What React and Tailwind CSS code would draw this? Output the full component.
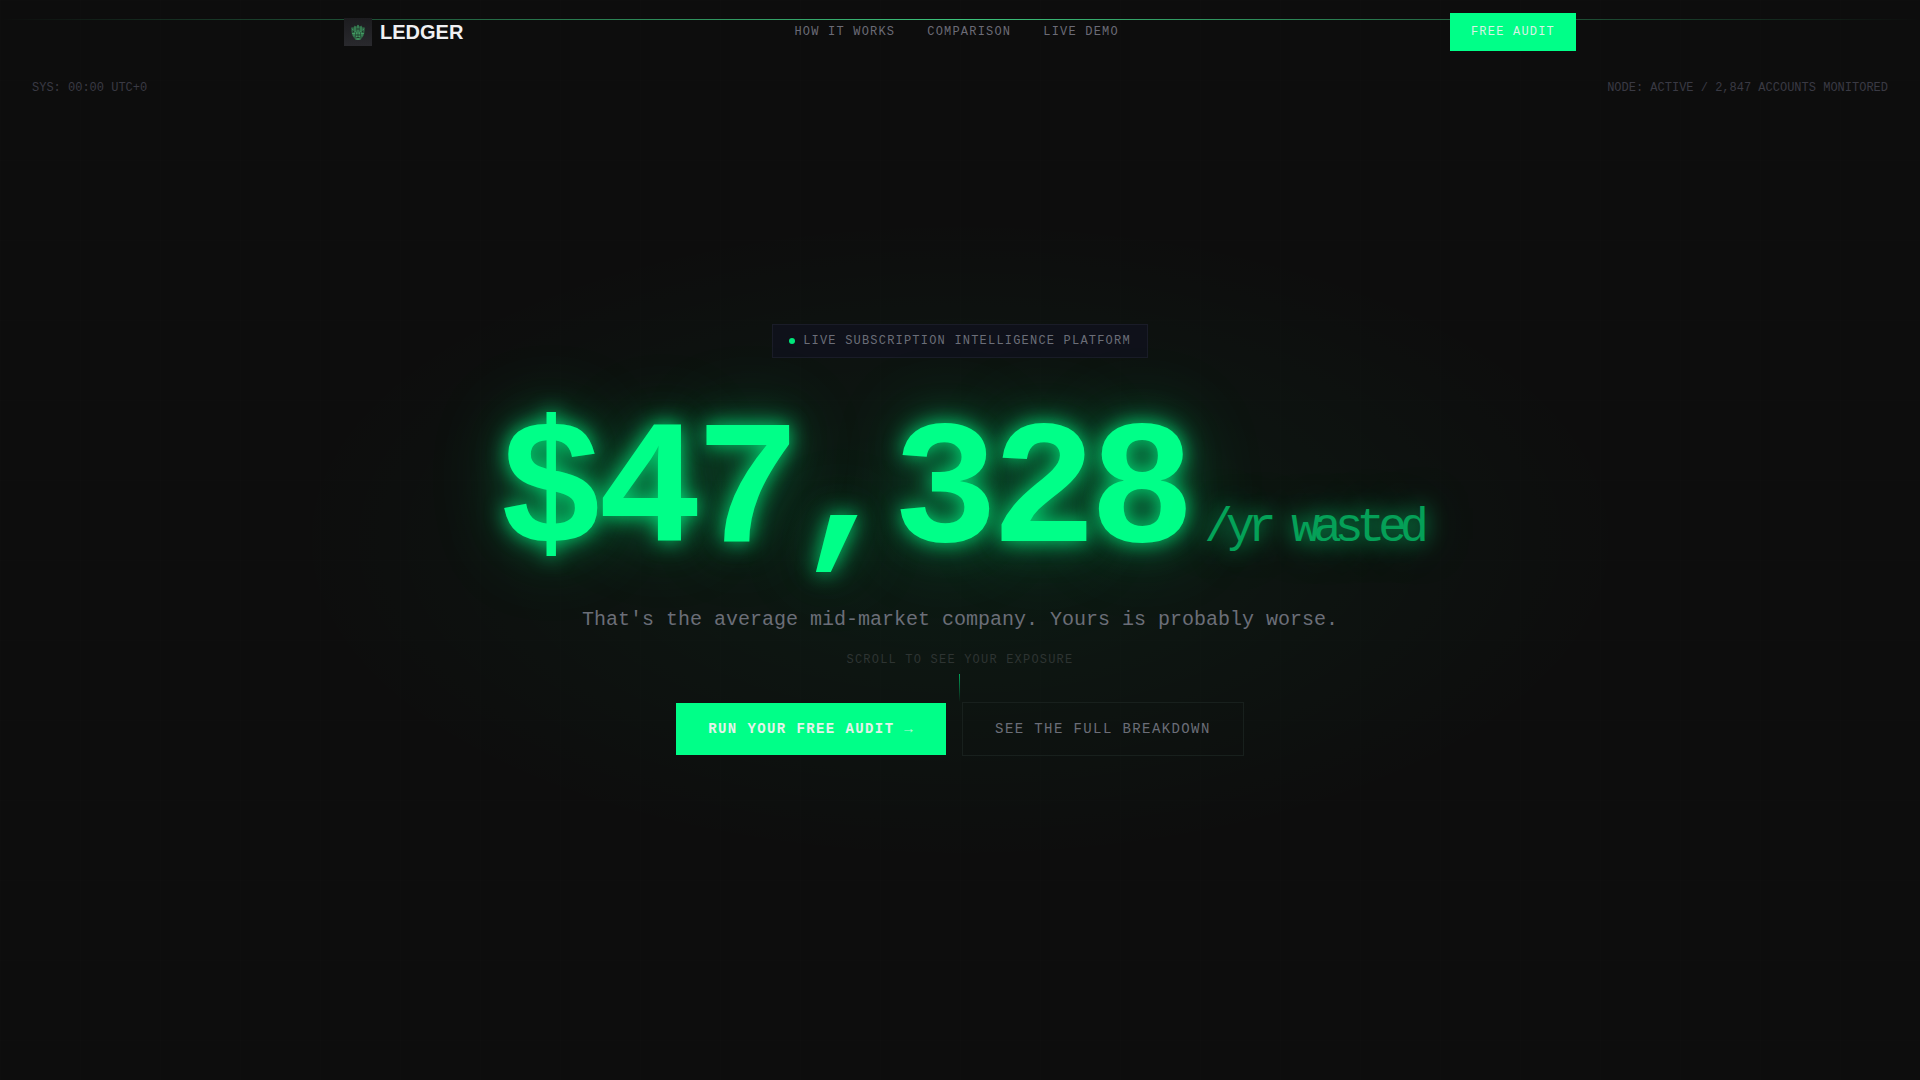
import React from 'react';

const navLinks = [
  { label: 'How it works', href: '#how' },
  { label: 'Comparison', href: '#comparison' },
  { label: 'Live demo', href: '#demo' },
];

const LogoMark = () => (
  <span className="flex items-center justify-center w-7 h-7 bg-linear-to-b from-[#1c1c1f] to-[#29292d]">
    <svg viewBox="0 0 28 28" className="w-7 h-7" fill="none" aria-hidden="true">
      <path d="M7.500 9 9.500 9.500 10.500 7.500 12.500 8.500 14 6.500l1.500 2 2-1 1 2 2-.5.3 3-.8 5-2 3-2 2h-4l-2-2-2-3-.8-5z" fill="#2c5f41" />
      <path d="M14 7v15M11 8.500v4l1.500 2v5M17 8.500v4l-1.500 2v5M8 10.500l2 3v5M20 10.500l-2 3v5M8 15.500h3M17 15.500h3M11.500 21h5" stroke="#46a468" strokeWidth="0.8" />
      <path d="M12.500 11h3M11.500 17h5M12.500 19.500h3M9.500 12.500v2M18.500 12.500v2" stroke="#1c2a22" strokeWidth="0.8" />
    </svg>
  </span>
);

const Header = () => (
  <header className="absolute top-0 inset-x-0 z-20">
    <div className="max-w-7xl mx-auto px-6 h-16 flex items-center justify-between">
      <a href="#top" className="flex items-center gap-2">
        <LogoMark />
        <span className="font-['Liberation_Sans',sans-serif] text-xl font-bold text-[#f0f0f2]">LEDGER</span>
      </a>
      <nav className="flex items-center gap-8">
        {navLinks.map((link) => (
          <a
            key={link.href}
            href={link.href}
            className="text-xs uppercase tracking-widest text-[#6b6b76] hover:text-white transition-colors"
          >
            {link.label}
          </a>
        ))}
      </nav>
      <button className="px-5 py-2.5 border border-[#00ff88] bg-[#00ff88] text-xs uppercase tracking-widest text-[#d8f2e4] cursor-pointer">
        Free audit
      </button>
    </div>
  </header>
);

const Hero = () => (
  <section id="top" className="relative min-h-screen flex flex-col items-center justify-center">
    {/* grid and glow behind the headline */}
    <div className="absolute inset-0 bg-[linear-gradient(rgba(255,255,255,0.004)_1px,transparent_1px),linear-gradient(90deg,rgba(255,255,255,0.004)_1px,transparent_1px)] bg-[size:80px_80px]" />
    <div className="absolute inset-0 bg-[radial-gradient(ellipse_35%_30%_at_50%_50%,rgba(0,255,136,0.06),transparent)]" />
    <div className="absolute top-[19px] inset-x-0 h-px bg-[linear-gradient(90deg,transparent,#3cc47c,transparent)]" />

    <div className="absolute top-20 inset-x-8 flex justify-between text-xs text-[#3a3a44]">
      <span>SYS: 00:00 UTC+0</span>
      <span>NODE: ACTIVE / 2,847 ACCOUNTS MONITORED</span>
    </div>

    <div className="relative flex flex-col items-center">
      <div className="flex items-center gap-2 px-4 py-2 border border-[#1a1c28] bg-[#0f111a] text-xs uppercase tracking-widest text-[#6b6e78]">
        <span className="w-1.5 h-1.5 rounded-full bg-[#00e67a]" />
        Live subscription intelligence platform
      </div>

      <h1 className="mt-12 text-[176px] leading-none font-bold tracking-[-0.04em] whitespace-nowrap text-[#00ff88] [text-shadow:0_0_20px_rgba(0,255,136,0.8),0_0_40px_rgba(0,255,136,0.25),0_0_80px_rgba(0,255,136,0.3)]">
        $47,328
        <span className="ml-4 text-5xl font-normal opacity-60 [text-shadow:0_0_20px_rgba(0,255,136,1),0_0_40px_rgba(0,255,136,0.5)]">/yr wasted</span>
      </h1>

      <p className="mt-6 text-xl leading-7 text-[#6b6e78]">
        That's the average mid-market company. Yours is probably worse.
      </p>

      <div className="mt-4 flex flex-col items-center gap-1">
        <span className="text-xs leading-5 uppercase tracking-widest text-[#2e3432]">Scroll to see your exposure</span>
        <span className="w-px h-7 bg-[linear-gradient(#00a65a,transparent)]" />
      </div>

      <div className="flex items-center gap-4 text-sm">
        <button className="px-8 py-4 bg-[#00ff88] font-bold uppercase tracking-widest text-[#e4f2ea] cursor-pointer">
          Run your free audit <span className="font-normal opacity-80">→</span>
        </button>
        <button className="px-8 py-4 border border-[#18201d] uppercase tracking-widest text-[#6b6e78] cursor-pointer">
          See the full breakdown
        </button>
      </div>
    </div>
  </section>
);

const App = () => (
  <div className="min-h-screen bg-[#0d0d0d] font-['Liberation_Mono',monospace] overflow-x-hidden">
    <Header />
    <Hero />
  </div>
);

export default App;
